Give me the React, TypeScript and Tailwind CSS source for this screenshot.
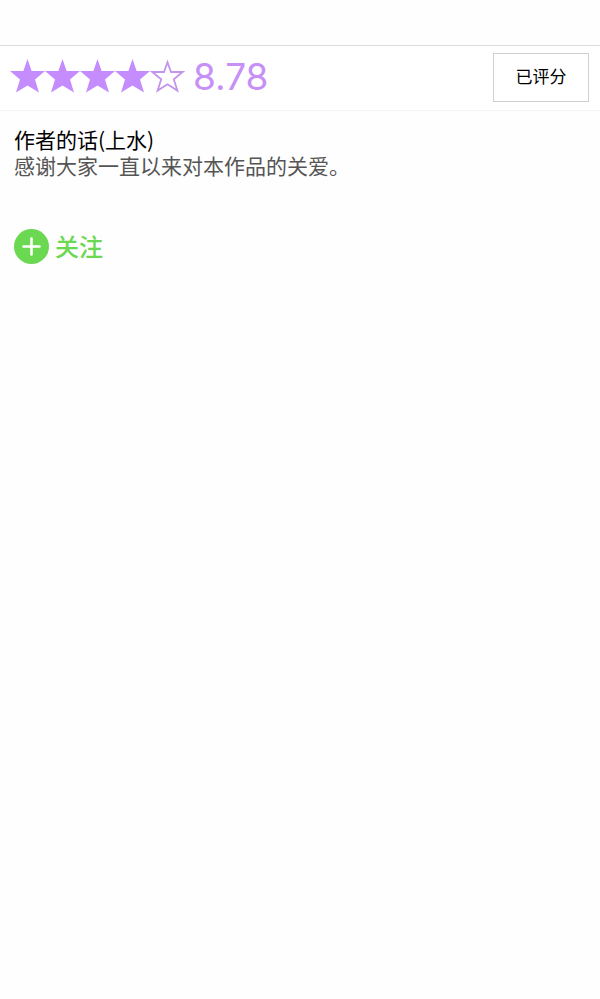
const STAR = 'M17.5 0 L21.6 12 L35 12 L25 20.6 L29 33.5 L17.5 26.4 L6 33.5 L10 20.6 L0 12 L13.4 12 Z';
const STAR_OUTLINE = 'M17.5 3.2 L21 13 L32.6 13 L23.8 20.2 L27.4 31.6 L17.5 25.2 L7.6 31.6 L11.2 20.2 L2.4 13 L14 13 Z';

function Star({ filled }: { filled: boolean }) {
  return (
    <svg width="35" height="34" viewBox="0 0 35 34" aria-hidden="true">
      {filled ? (
        <path d={STAR} fill="#c48cfd" />
      ) : (
        <path d={STAR_OUTLINE} fill="none" stroke="#c294ec" strokeWidth="1.8" />
      )}
    </svg>
  );
}

export default function App() {
  const score = 8.78;

  return (
    <main className="min-h-screen bg-[#fefefe] pt-[45px] font-['Noto_Sans_CJK_SC',sans-serif]">
      {/* Rating bar */}
      <section className="flex items-start justify-between border-t border-b border-t-[#dcdcdc] border-b-[#f3f3f3] bg-white pt-[7px] pr-[11px] pb-2 pl-[10px]">
        <div className="flex h-12 items-center">
          <div className="flex pb-0.5">
            {[1, 2, 3, 4, 5].map((n) => (
              <Star key={n} filled={n <= Math.floor(score / 2)} />
            ))}
          </div>
          <span className="ml-2 font-['Inter',sans-serif] text-[37px] leading-10 text-[#c690f6]">
            {score}
          </span>
        </div>
        <button className="h-[49px] w-24 border border-[#d0d0d0] bg-white pb-1 text-[17px] text-black">
          已评分
        </button>
      </section>

      {/* Author note */}
      <section className="px-[14px] pt-[15px]">
        <h2 className="text-[21px] leading-[26px] text-black">作者的话(上水)</h2>
        <p className="text-[21px] leading-[26px] text-[#555]">感谢大家一直以来对本作品的关爱。</p>

        <button className="mt-[50px] flex items-center gap-1.5 text-2xl leading-9 font-medium text-[#6ad850]">
          <svg width="35" height="35" viewBox="0 0 35 35" aria-hidden="true">
            <circle cx="17.5" cy="17.5" r="17.5" fill="#6ad850" />
            <path d="M17.5 9.5v16M9.5 17.5h16" stroke="#fff" strokeWidth="2.6" strokeLinecap="round" />
          </svg>
          关注
        </button>
      </section>
    </main>
  );
}
